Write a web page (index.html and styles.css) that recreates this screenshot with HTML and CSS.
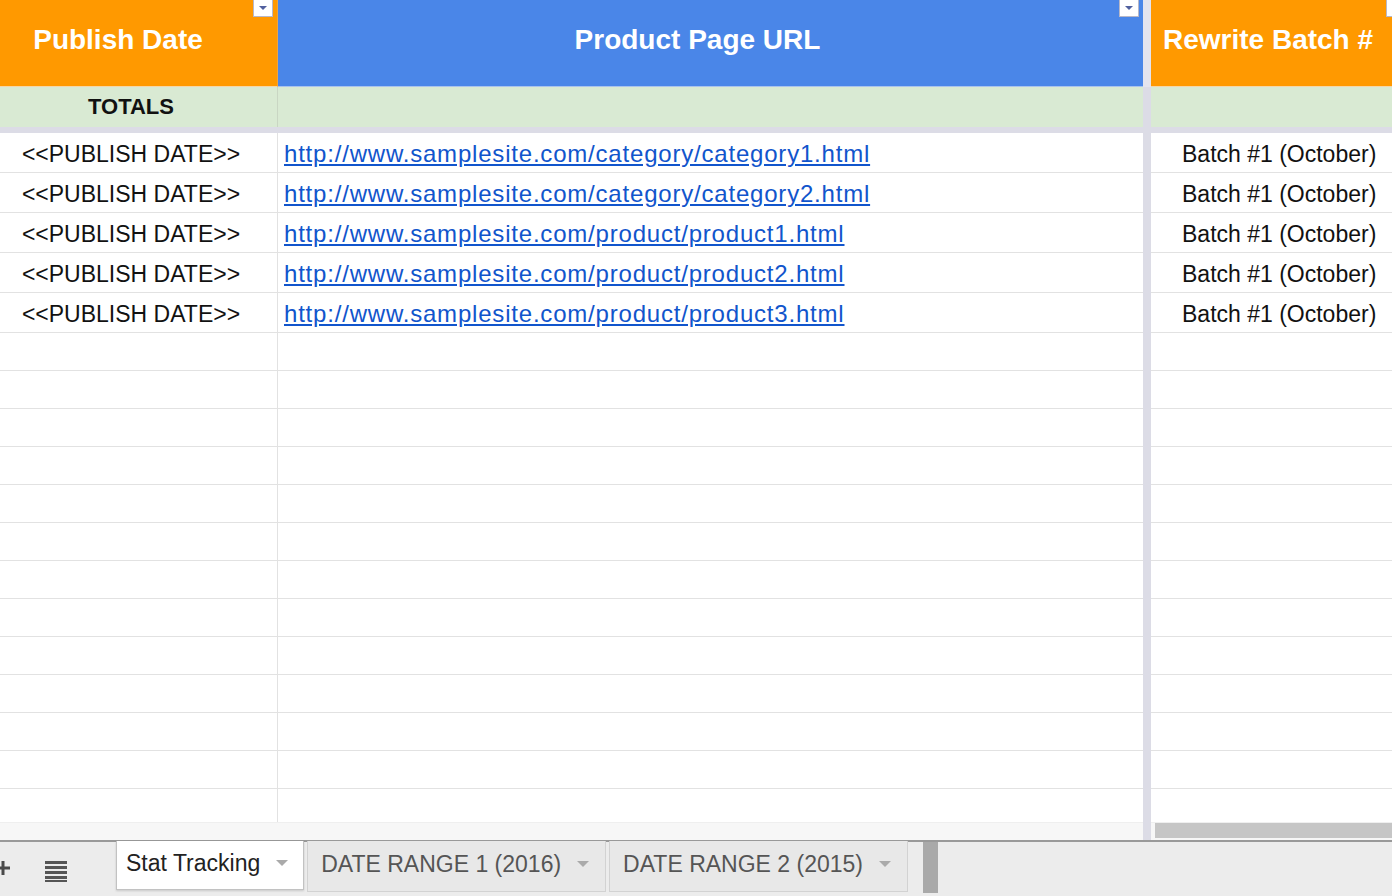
FILE: index.html
```html
<!DOCTYPE html>
<html lang="en">
<head>
  <meta charset="UTF-8" />
  <title>Stat Tracking</title>
  <link rel="stylesheet" href="styles.css">
</head>
<body>

  <div class="sheet">
    <div class="row head">
      <div class="cell a">Publish Date<i class="filter"></i></div>
      <div class="cell b">Product Page URL<i class="filter"></i></div>
      <div class="cell freeze"></div>
      <div class="cell c">Rewrite Batch #<i class="filter"></i></div>
    </div>
    <div class="row totals">
      <div class="cell a">TOTALS</div>
      <div class="cell b"></div>
      <div class="cell freeze"></div>
      <div class="cell c"></div>
    </div>
    <div class="freeze-line"></div>

    <div class="row data">
      <div class="cell a">&lt;&lt;PUBLISH DATE&gt;&gt;</div>
      <div class="cell b"><a href="#">http://www.samplesite.com/category/category1.html</a></div>
      <div class="cell freeze"></div>
      <div class="cell c">Batch #1 (October)</div>
    </div>
    <div class="row data">
      <div class="cell a">&lt;&lt;PUBLISH DATE&gt;&gt;</div>
      <div class="cell b"><a href="#">http://www.samplesite.com/category/category2.html</a></div>
      <div class="cell freeze"></div>
      <div class="cell c">Batch #1 (October)</div>
    </div>
    <div class="row data">
      <div class="cell a">&lt;&lt;PUBLISH DATE&gt;&gt;</div>
      <div class="cell b"><a href="#">http://www.samplesite.com/product/product1.html</a></div>
      <div class="cell freeze"></div>
      <div class="cell c">Batch #1 (October)</div>
    </div>
    <div class="row data">
      <div class="cell a">&lt;&lt;PUBLISH DATE&gt;&gt;</div>
      <div class="cell b"><a href="#">http://www.samplesite.com/product/product2.html</a></div>
      <div class="cell freeze"></div>
      <div class="cell c">Batch #1 (October)</div>
    </div>
    <div class="row data">
      <div class="cell a">&lt;&lt;PUBLISH DATE&gt;&gt;</div>
      <div class="cell b"><a href="#">http://www.samplesite.com/product/product3.html</a></div>
      <div class="cell freeze"></div>
      <div class="cell c">Batch #1 (October)</div>
    </div>

    <div class="row empty"><div class="cell a"></div><div class="cell b"></div><div class="cell freeze"></div><div class="cell c"></div></div>
    <div class="row empty"><div class="cell a"></div><div class="cell b"></div><div class="cell freeze"></div><div class="cell c"></div></div>
    <div class="row empty"><div class="cell a"></div><div class="cell b"></div><div class="cell freeze"></div><div class="cell c"></div></div>
    <div class="row empty"><div class="cell a"></div><div class="cell b"></div><div class="cell freeze"></div><div class="cell c"></div></div>
    <div class="row empty"><div class="cell a"></div><div class="cell b"></div><div class="cell freeze"></div><div class="cell c"></div></div>
    <div class="row empty"><div class="cell a"></div><div class="cell b"></div><div class="cell freeze"></div><div class="cell c"></div></div>
    <div class="row empty"><div class="cell a"></div><div class="cell b"></div><div class="cell freeze"></div><div class="cell c"></div></div>
    <div class="row empty"><div class="cell a"></div><div class="cell b"></div><div class="cell freeze"></div><div class="cell c"></div></div>
    <div class="row empty"><div class="cell a"></div><div class="cell b"></div><div class="cell freeze"></div><div class="cell c"></div></div>
    <div class="row empty"><div class="cell a"></div><div class="cell b"></div><div class="cell freeze"></div><div class="cell c"></div></div>
    <div class="row empty"><div class="cell a"></div><div class="cell b"></div><div class="cell freeze"></div><div class="cell c"></div></div>
    <div class="row empty"><div class="cell a"></div><div class="cell b"></div><div class="cell freeze"></div><div class="cell c"></div></div>
    <div class="row empty last"><div class="cell a"></div><div class="cell b"></div><div class="cell freeze"></div><div class="cell c"></div></div>

    <div class="row scroll">
      <div class="cell a"></div>
      <div class="cell b"></div>
      <div class="cell freeze"></div>
      <div class="cell c"><div class="thumb"></div></div>
    </div>
  </div>

  <div class="tabs">
    <div class="add">
      <svg width="16" height="16" viewBox="0 0 16 16"><path d="M8 1v14M1 8h14" stroke="#4a4a4a" stroke-width="3"/></svg>
    </div>
    <div class="all-sheets">
      <svg width="22" height="22" viewBox="0 0 22 22">
        <rect x="0" y="1" width="22" height="3" fill="#555"/>
        <rect x="0" y="6" width="22" height="3" fill="#555"/>
        <rect x="0" y="11" width="22" height="3" fill="#555"/>
        <rect x="0" y="16" width="22" height="3" fill="#555"/>
        <rect x="0" y="20" width="22" height="2" fill="#555"/>
      </svg>
    </div>
    <div class="tab active">Stat Tracking<span class="arrow"></span></div>
    <div class="tab">DATE RANGE 1 (2016)<span class="arrow"></span></div>
    <div class="tab">DATE RANGE 2 (2015)<span class="arrow"></span></div>
    <div class="tab-scroll"></div>
  </div>

</body>
</html>
```

FILE: styles.css
```css
* {
  box-sizing: border-box;
}

body {
  margin: 0;
  background-color: #fff;
  font-family: "Liberation Sans", Arial, sans-serif;
  height: 100vh;
  overflow: hidden;
}

.row {
  display: grid;
  grid-template-columns: 278px 865px 8px 1fr;
}

.cell {
  position: relative;
  display: flex;
  align-items: center;
  white-space: nowrap;
  overflow: visible;
}

.cell.freeze {
  background-color: #dcdce6;
}

/* header */

.head {
  height: 87px;
}

.head .cell {
  color: #fff;
  font-weight: bold;
  font-size: 28px;
  padding-bottom: 6px;
}

.head .a {
  background-color: #ff9900;
  justify-content: center;
  padding-right: 41px;
  border-right: 1px solid #f2a63a;
  border-bottom: 1px solid #f5d6a8;
}

.head .b {
  background-color: #4a86e8;
  justify-content: center;
  padding-right: 26px;
  border-bottom: 1px solid #a9c3ee;
}

.head .freeze {
  background-color: #e4e4ee;
}

.head .c {
  background-color: #ff9900;
  padding-left: 12px;
  border-bottom: 1px solid #f5d6a8;
}

.filter {
  position: absolute;
  top: -2px;
  right: 4px;
  width: 20px;
  height: 19px;
  background: #fff;
  border: 1px solid #b8b8c8;
}

.filter::after {
  content: "";
  position: absolute;
  left: 5px;
  top: 7px;
  border-left: 4px solid transparent;
  border-right: 4px solid transparent;
  border-top: 4px solid #51609e;
}

.head .c .filter {
  right: auto;
  left: 235px;
}

/* totals */

.totals {
  height: 40px;
}

.totals .cell {
  background-color: #d9ead3;
}

.totals .a {
  justify-content: center;
  padding-right: 15px;
  font-weight: bold;
  font-size: 22px;
  color: #111;
  border-right: 1px solid #c9d6c3;
}

.totals .freeze {
  background-color: #dcdce6;
}

.freeze-line {
  height: 6px;
  background-color: #dcdce6;
}

/* body rows */

.data {
  height: 40px;
}

.empty {
  height: 38px;
}

.empty.last {
  height: 33px;
}

.data .cell,
.empty .cell {
  font-size: 23px;
  color: #111;
  border-bottom: 1px solid #e2e2e2;
}

.data .cell {
  padding-top: 3px;
}

.data .freeze,
.empty .freeze {
  border-bottom: none;
}

.empty.last .cell {
  border-bottom: none;
}

.data .a,
.empty .a {
  justify-content: center;
  padding-right: 15px;
  border-right: 1px solid #e2e2e2;
}

.data .b {
  padding-left: 6px;
}

.data .c {
  padding-left: 31px;
}

.data a {
  color: #1155cc;
  font-size: 24px;
  letter-spacing: 0.8px;
  text-decoration: underline;
  text-underline-offset: 2px;
}

/* scroll strip */

.scroll {
  height: 18px;
}

.scroll .a,
.scroll .b,
.scroll .c {
  background-color: #f7f7f7;
  border-top: 1px solid #efefef;
}

.scroll .c {
  align-items: flex-start;
  padding-left: 4px;
}

.thumb {
  width: 100%;
  height: 15px;
  background-color: #c6c6c6;
}

/* sheet tabs */

.tabs {
  height: 56px;
  background-color: #ececec;
  border-top: 2px solid #999;
  display: flex;
  align-items: flex-start;
}

.add {
  width: 50px;
  height: 54px;
  display: flex;
  align-items: center;
  margin-left: -5px;
  padding-bottom: 2px;
}

.all-sheets {
  width: 71px;
  height: 54px;
  display: flex;
  align-items: center;
  padding-top: 4px;
}

.tab {
  height: 51px;
  margin-top: -1px;
  display: flex;
  align-items: center;
  padding: 0 16px 4px 13px;
  margin-right: 3px;
  font-size: 23px;
  color: #555;
  background-color: #e8e8e8;
  border: 1px solid #d2d2d2;
  border-top: none;
}

.tab.active {
  height: 49px;
  padding-left: 9px;
  padding-right: 15px;
  color: #222;
  background-color: #fff;
  border: 1px solid #c2c2c2;
  border-top: none;
  box-shadow: 0 1px 2px rgba(0, 0, 0, 0.15);
}

.arrow {
  margin-left: 16px;
  border-left: 6px solid transparent;
  border-right: 6px solid transparent;
  border-top: 6px solid #aaa;
}

.tab-scroll {
  width: 15px;
  height: 51px;
  margin-left: 12px;
  background-color: #a9a9a9;
}
```
